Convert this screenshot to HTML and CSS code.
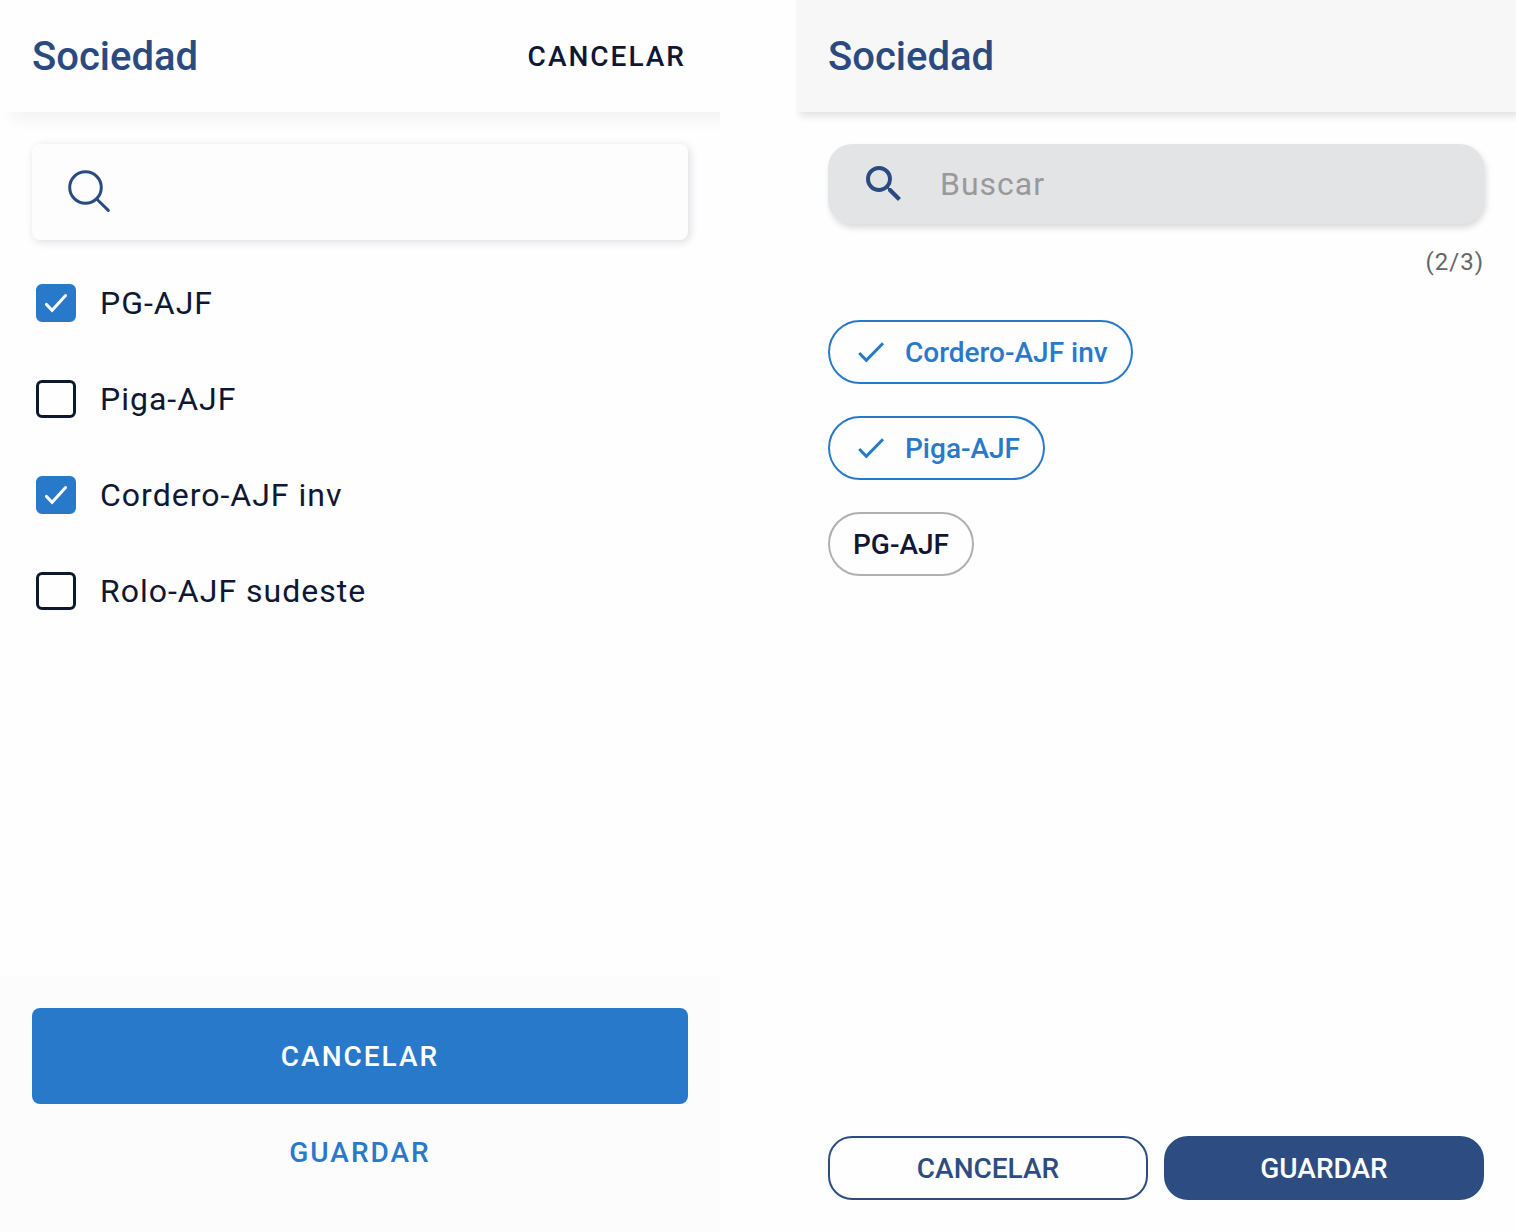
FILE: index.html
```html
<!DOCTYPE html>
<html lang="es">

<head>
    <meta charset="UTF-8">
    <meta name="viewport" content="width=device-width, initial-scale=1.0">
    <title>Sociedad</title>
    <link rel="stylesheet" href="styles.css">
</head>

<body>

    <div class="screens">

        <!-- Checkbox list -->
        <section class="screen">
            <header class="header">
                <h1>Sociedad</h1>
                <button type="button" class="text-button dark">CANCELAR</button>
            </header>

            <main class="content">
                <div class="search">
                    <svg class="search-icon" viewBox="0 0 48 48" aria-hidden="true">
                        <circle cx="21.5" cy="19.5" r="15.8" />
                        <path d="M32.7 31L44.3 42.4" />
                    </svg>
                    <input type="search" aria-label="Buscar sociedad">
                </div>

                <ul class="options">
                    <li>
                        <label class="option">
                            <span class="checkbox">
                                <input type="checkbox" checked>
                                <svg viewBox="0 0 40 38" aria-hidden="true"><path d="M10.4 20.4L16.1 26.3L29.6 11.5" /></svg>
                            </span>
                            PG-AJF
                        </label>
                    </li>
                    <li>
                        <label class="option">
                            <span class="checkbox">
                                <input type="checkbox">
                                <svg viewBox="0 0 40 38" aria-hidden="true"><path d="M10.4 20.4L16.1 26.3L29.6 11.5" /></svg>
                            </span>
                            Piga-AJF
                        </label>
                    </li>
                    <li>
                        <label class="option">
                            <span class="checkbox">
                                <input type="checkbox" checked>
                                <svg viewBox="0 0 40 38" aria-hidden="true"><path d="M10.4 20.4L16.1 26.3L29.6 11.5" /></svg>
                            </span>
                            Cordero-AJF inv
                        </label>
                    </li>
                    <li>
                        <label class="option">
                            <span class="checkbox">
                                <input type="checkbox">
                                <svg viewBox="0 0 40 38" aria-hidden="true"><path d="M10.4 20.4L16.1 26.3L29.6 11.5" /></svg>
                            </span>
                            Rolo-AJF sudeste
                        </label>
                    </li>
                </ul>
            </main>

            <footer class="footer stacked">
                <button type="button" class="block-button">CANCELAR</button>
                <button type="button" class="text-button tall">GUARDAR</button>
            </footer>
        </section>

        <!-- Chip list -->
        <section class="screen">
            <header class="header gray">
                <h1>Sociedad</h1>
            </header>

            <main class="content">
                <div class="search rounded">
                    <svg class="search-icon filled" viewBox="0 0 24 24" aria-hidden="true">
                        <path d="M15.5 14h-.79l-.28-.27A6.471 6.471 0 0 0 16 9.5 6.5 6.5 0 1 0 9.5 16c1.61 0 3.09-.59 4.23-1.57l.27.28v.79l5 4.99L20.49 19l-4.99-5zm-6 0C7.01 14 5 11.99 5 9.5S7.01 5 9.5 5 14 7.01 14 9.5 11.99 14 9.5 14z" />
                    </svg>
                    <input type="search" placeholder="Buscar" aria-label="Buscar">
                </div>

                <p class="counter">(2/3)</p>

                <div class="chips">
                    <button type="button" class="chip selected" aria-pressed="true">
                        <svg viewBox="0 0 36 36" aria-hidden="true"><path d="M6.2 19L13.3 26.3L30 9.3" /></svg>
                        Cordero-AJF inv
                    </button>
                    <button type="button" class="chip selected" aria-pressed="true">
                        <svg viewBox="0 0 36 36" aria-hidden="true"><path d="M6.2 19L13.3 26.3L30 9.3" /></svg>
                        Piga-AJF
                    </button>
                    <button type="button" class="chip" aria-pressed="false">PG-AJF</button>
                </div>
            </main>

            <footer class="footer">
                <button type="button" class="pill-button">CANCELAR</button>
                <button type="button" class="pill-button primary">GUARDAR</button>
            </footer>
        </section>

    </div>

    <script>
        // Toggle chips and keep the counter up to date
        const chips = document.querySelectorAll('.chip');
        const icon = document.querySelector('.chip svg').cloneNode(true);

        chips.forEach(chip => {
            chip.addEventListener('click', () => {
                const selected = chip.classList.toggle('selected');
                chip.setAttribute('aria-pressed', selected);
                if (selected) {
                    chip.prepend(icon.cloneNode(true));
                } else {
                    chip.querySelector('svg').remove();
                }
                const total = document.querySelectorAll('.chip.selected').length;
                document.querySelector('.counter').textContent = `(${total}/${chips.length})`;
            });
        });
    </script>
</body>

</html>
```

FILE: styles.css
```css
* {
    box-sizing: border-box;
}

body {
    font-family: Roboto, "Liberation Sans", sans-serif;
    background-color: #fefefe;
    color: #0f1733;
    margin: 0;
}

button,
input {
    font-family: inherit;
    color: inherit;
    margin: 0;
}

button {
    padding: 0;
    border: none;
    background: none;
    font-size: 28px;
    font-weight: 500;
    cursor: pointer;
}

.screens {
    display: grid;
    grid-template-columns: 1fr 1fr;
    gap: 76px;
    min-height: 100vh;
}

.screen {
    display: flex;
    flex-direction: column;
    overflow: hidden;
}

/* Header */
.header {
    display: flex;
    align-items: center;
    justify-content: space-between;
    height: 112px;
    padding: 0 32px;
    background-color: #fefefe;
    box-shadow: 12px 6px 16px rgba(30, 40, 70, 0.06);
}

.header.gray {
    background-color: #f7f7f7;
    box-shadow: 4px 4px 8px rgba(0, 0, 0, 0.12);
}

.header h1 {
    margin: 0;
    font-size: 40px;
    font-weight: 500;
    color: #2b4b80;
}

.content {
    flex: 1;
    padding: 32px;
}

/* Search */
.search {
    display: flex;
    align-items: center;
    gap: 32px;
    height: 96px;
    padding: 0 32px;
    border-radius: 8px;
    background-color: #fdfdfd;
    box-shadow: 2px 2px 8px rgba(15, 23, 51, 0.14);
}

.search.rounded {
    height: 80px;
    border-radius: 24px;
    background-color: #e3e4e6;
    box-shadow: 2px 4px 6px rgba(0, 0, 0, 0.14);
}

.search input {
    flex: 1;
    min-width: 0;
    padding: 0;
    border: none;
    outline: none;
    background: none;
    font-size: 32px;
    letter-spacing: 1px;
}

.search input::placeholder {
    color: #999999;
    opacity: 1;
}

.search-icon {
    width: 48px;
    height: 48px;
    fill: none;
    stroke: #2b4b80;
    stroke-width: 3;
    stroke-linecap: round;
}

.search-icon.filled {
    fill: #2b4b80;
    stroke: none;
}

/* Checkbox options */
.options {
    display: flex;
    flex-direction: column;
    gap: 48px;
    margin: 39px 0 0;
    padding: 0 4px;
    list-style: none;
}

.option {
    display: flex;
    align-items: center;
    gap: 24px;
    font-size: 32px;
    line-height: 48px;
    letter-spacing: 1px;
    cursor: pointer;
}

.checkbox {
    display: grid;
    width: 40px;
    height: 38px;
}

.checkbox input,
.checkbox svg {
    grid-area: 1 / 1;
    width: 40px;
    height: 38px;
}

.checkbox input {
    appearance: none;
    border: 3px solid #0f1733;
    border-radius: 6px;
    cursor: pointer;
}

.checkbox input:checked {
    border-color: #2979cb;
    background-color: #2979cb;
}

.checkbox svg {
    visibility: hidden;
    pointer-events: none;
    fill: none;
    stroke: #ffffff;
    stroke-width: 3;
    stroke-linecap: round;
}

.checkbox input:checked + svg {
    visibility: visible;
}

/* Chips */
.counter {
    margin: 24px 0 44px;
    font-size: 24px;
    line-height: 28px;
    letter-spacing: 1px;
    text-align: right;
    color: #666666;
}

.chips {
    display: flex;
    flex-direction: column;
    align-items: flex-start;
    gap: 32px;
}

.chip {
    display: flex;
    align-items: center;
    gap: 16px;
    height: 64px;
    padding: 0 23px;
    border: 2px solid #b0b0b0;
    border-radius: 32px;
}

.chip.selected {
    border-color: #2979cb;
    color: #2979cb;
}

.chip svg {
    width: 36px;
    height: 36px;
    fill: none;
    stroke: #2979cb;
    stroke-width: 3;
}

/* Footer buttons */
.footer {
    display: flex;
    gap: 16px;
    padding: 32px;
}

.footer.stacked {
    flex-direction: column;
    gap: 0;
    background-color: #fcfcfd;
}

.text-button,
.block-button {
    padding: 0 2px;
    letter-spacing: 2px;
    color: #2979cb;
}

.text-button.dark {
    color: #0f1733;
}

.text-button.tall,
.block-button {
    height: 96px;
}

.block-button {
    border-radius: 8px;
    background-color: #2979cb;
    color: #ffffff;
}

.pill-button {
    flex: 1;
    height: 64px;
    border: 2px solid #2d4d82;
    border-radius: 24px;
    color: #2d4d82;
}

.pill-button.primary {
    background-color: #2d4d82;
    color: #ffffff;
}
```
